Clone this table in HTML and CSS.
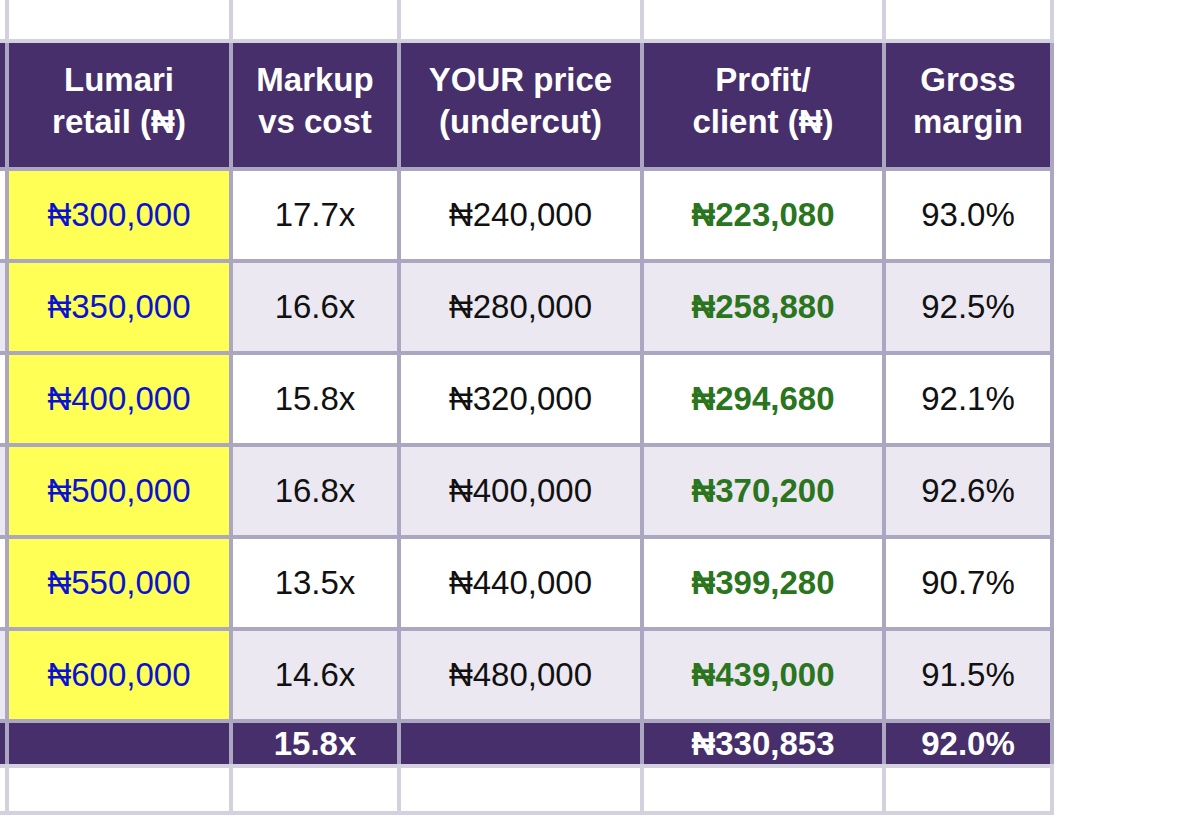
FILE: index.html
```html
<!DOCTYPE html>
<html lang="en">
<head>
<meta charset="utf-8">
<title>Pricing sheet</title>
<link rel="stylesheet" href="styles.css">
</head>
<body>
<div class="sheet">
  <div class="grid blank top">
    <div class="cell"></div><div class="cell"></div><div class="cell"></div><div class="cell"></div><div class="cell"></div><div class="cell"></div>
  </div>
  <div class="grid main">
    <div class="row head">
      <div class="cell"></div>
      <div class="cell">Lumari<br>retail (₦)</div>
      <div class="cell">Markup<br>vs cost</div>
      <div class="cell">YOUR price<br>(undercut)</div>
      <div class="cell">Profit/<br>client (₦)</div>
      <div class="cell">Gross<br>margin</div>
    </div>
    <div class="row data">
      <div class="cell"></div>
      <div class="cell retail">₦300,000</div>
      <div class="cell">17.7x</div>
      <div class="cell">₦240,000</div>
      <div class="cell profit">₦223,080</div>
      <div class="cell">93.0%</div>
    </div>
    <div class="row data alt">
      <div class="cell"></div>
      <div class="cell retail">₦350,000</div>
      <div class="cell">16.6x</div>
      <div class="cell">₦280,000</div>
      <div class="cell profit">₦258,880</div>
      <div class="cell">92.5%</div>
    </div>
    <div class="row data">
      <div class="cell"></div>
      <div class="cell retail">₦400,000</div>
      <div class="cell">15.8x</div>
      <div class="cell">₦320,000</div>
      <div class="cell profit">₦294,680</div>
      <div class="cell">92.1%</div>
    </div>
    <div class="row data alt">
      <div class="cell"></div>
      <div class="cell retail">₦500,000</div>
      <div class="cell">16.8x</div>
      <div class="cell">₦400,000</div>
      <div class="cell profit">₦370,200</div>
      <div class="cell">92.6%</div>
    </div>
    <div class="row data">
      <div class="cell"></div>
      <div class="cell retail">₦550,000</div>
      <div class="cell">13.5x</div>
      <div class="cell">₦440,000</div>
      <div class="cell profit">₦399,280</div>
      <div class="cell">90.7%</div>
    </div>
    <div class="row data alt">
      <div class="cell"></div>
      <div class="cell retail">₦600,000</div>
      <div class="cell">14.6x</div>
      <div class="cell">₦480,000</div>
      <div class="cell profit">₦439,000</div>
      <div class="cell">91.5%</div>
    </div>
    <div class="row total">
      <div class="cell"></div>
      <div class="cell"></div>
      <div class="cell">15.8x</div>
      <div class="cell"></div>
      <div class="cell">₦330,853</div>
      <div class="cell">92.0%</div>
    </div>
  </div>
  <div class="grid blank bottom">
    <div class="cell"></div><div class="cell"></div><div class="cell"></div><div class="cell"></div><div class="cell"></div><div class="cell"></div>
  </div>
</div>
</body>
</html>
```

FILE: styles.css
```css
html, body {
  margin: 0;
  padding: 0;
  background: #ffffff;
}

.sheet {
  width: 1200px;
  height: 817px;
  overflow: hidden;
  font-family: "Liberation Sans", Arial, "DejaVu Sans", sans-serif;
  font-size: 33px;
  color: #111111;
}

.grid {
  display: grid;
  grid-template-columns: 5px 220px 164px 239px 238px 164px;
  column-gap: 4px;
  row-gap: 4px;
  padding-right: 4px;
  width: max-content;
}

.blank {
  background: #d4d1de;
}

.blank .cell {
  background: #ffffff;
}

.top {
  grid-auto-rows: 39px;
  padding-bottom: 4px;
}

.bottom {
  grid-auto-rows: 43px;
  padding-top: 4px;
  padding-bottom: 4px;
}

.main {
  background: #aca7c0;
  grid-template-rows: 124px repeat(6, 88px) 41px;
}

.row {
  display: contents;
}

.cell {
  display: flex;
  align-items: center;
  justify-content: center;
  text-align: center;
  white-space: nowrap;
}

.head .cell {
  background: #472f6b;
  color: #ffffff;
  font-weight: bold;
  line-height: 42px;
  padding-bottom: 8px;
}

.data .cell {
  background: #ffffff;
}

.data.alt .cell {
  background: #ebe8f2;
}

.data .cell.retail {
  background: #ffff55;
  color: #0a12d2;
}

.data .cell.profit {
  color: #2a751d;
  font-weight: bold;
}

.total .cell {
  background: #472f6b;
  color: #ffffff;
  font-weight: bold;
}
```
